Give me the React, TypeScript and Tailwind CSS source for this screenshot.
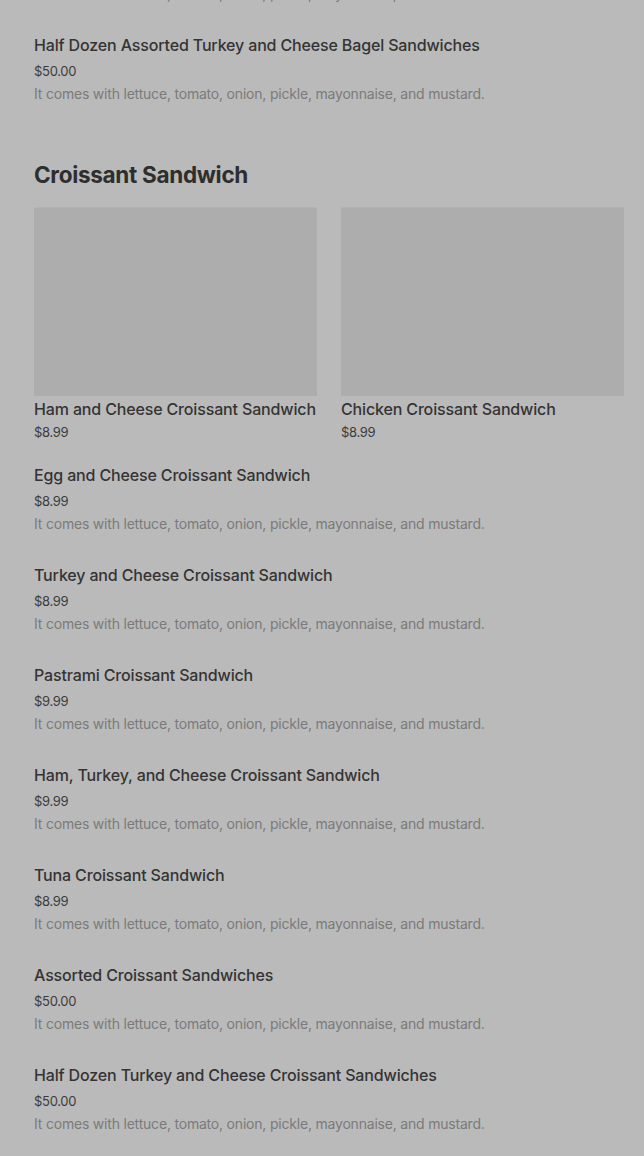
import React from "react";

interface MenuItem {
  name: string;
  price: string;
  desc?: string;
}

const DESC = "It comes with lettuce, tomato, onion, pickle, mayonnaise, and mustard.";

const featured: MenuItem[] = [
  { name: "Ham and Cheese Croissant Sandwich", price: "$8.99" },
  { name: "Chicken Croissant Sandwich", price: "$8.99" },
];

const items: MenuItem[] = [
  { name: "Egg and Cheese Croissant Sandwich", price: "$8.99", desc: DESC },
  { name: "Turkey and Cheese Croissant Sandwich", price: "$8.99", desc: DESC },
  { name: "Pastrami Croissant Sandwich", price: "$9.99", desc: DESC },
  { name: "Ham, Turkey, and Cheese Croissant Sandwich", price: "$9.99", desc: DESC },
  { name: "Tuna Croissant Sandwich", price: "$8.99", desc: DESC },
  { name: "Assorted Croissant Sandwiches", price: "$50.00", desc: DESC },
  { name: "Half Dozen Turkey and Cheese Croissant Sandwiches", price: "$50.00", desc: DESC },
];

const Row: React.FC<{ item: MenuItem }> = ({ item }) => (
  <div className="pb-[28px]">
    <div className="text-[16px] leading-[24px] font-medium text-[#343434] tracking-[-0.15px]">{item.name}</div>
    <div className="pt-[2px] text-[13px] leading-[24px] text-[#3c3c3c] tracking-[-0.3px]">{item.price}</div>
    {item.desc && (
      <div className="text-[14px] leading-[22px] text-[#7b7b7b] tracking-[-0.2px]">{item.desc}</div>
    )}
  </div>
);

export default function App() {
  return (
    <div
      className="h-[1156px] bg-[#bababa] pl-[34px] pr-[20px] overflow-hidden"
      style={{ fontFamily: "Inter, 'Noto Sans', sans-serif" }}
    >
      <div className="-mt-[67px]">
        <Row item={{ name: "Assorted Turkey and Cheese Bagel Sandwiches", price: "$50.00", desc: DESC }} />
        <Row item={{ name: "Half Dozen Assorted Turkey and Cheese Bagel Sandwiches", price: "$50.00", desc: DESC }} />
      </div>

      <h2 className="mt-[26px] text-[22.5px] leading-[32px] font-bold text-[#2e2e2e] tracking-[-0.3px]">
        Croissant Sandwich
      </h2>

      <div className="mt-[16px] grid grid-cols-2 gap-x-[24px]">
        {featured.map((f) => (
          <div key={f.name}>
            <div className="h-[189px] bg-[#adadad] border-t border-[#b3b3b3]" />
            <div className="mt-[1px] text-[16px] leading-[24px] font-medium text-[#343434] tracking-[-0.15px] whitespace-nowrap">
              {f.name}
            </div>
            <div className="text-[13px] leading-[22px] text-[#3c3c3c] tracking-[-0.3px]">{f.price}</div>
          </div>
        ))}
      </div>

      <div className="mt-[20px]">
        {items.map((it) => (
          <Row key={it.name} item={it} />
        ))}
      </div>
    </div>
  );
}
